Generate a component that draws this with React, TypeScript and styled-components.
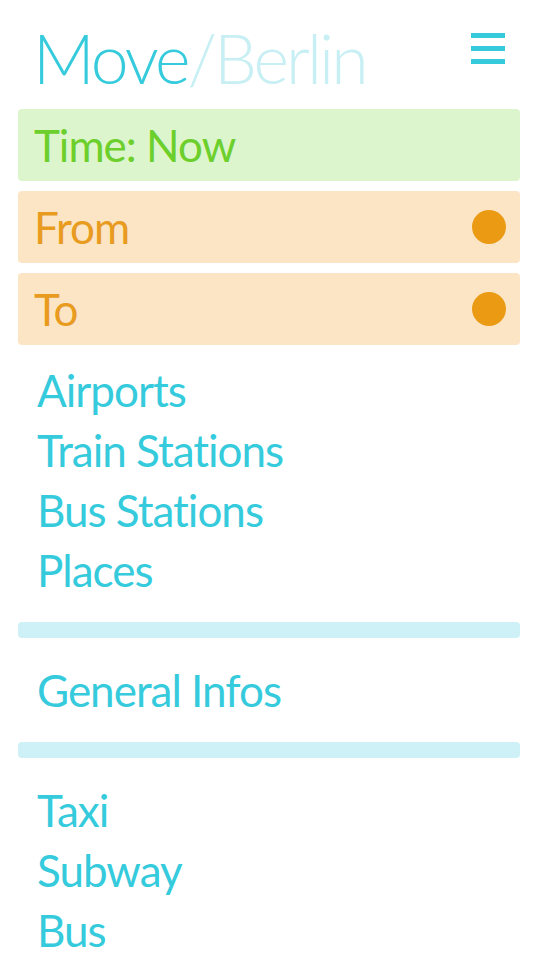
import styled, { createGlobalStyle } from "styled-components";

const GlobalStyle = createGlobalStyle`
  html, body {
    margin: 0;
    padding: 0;
    background: #ffffff;
  }
  body {
    font-family: Lato, "Open Sans", sans-serif;
  }
`;

const Page = styled.div`
  width: 540px;
  height: 960px;
  overflow: hidden;
  padding: 0 20px 0 18px;
  box-sizing: border-box;
  display: flex;
  flex-direction: column;
`;

const Header = styled.header`
  height: 110px;
  padding-top: 22px;
  box-sizing: border-box;
  display: flex;
  justify-content: space-between;
  align-items: flex-start;
`;

const Title = styled.h1`
  margin: 0 0 0 15px;
  font-size: 68px;
  line-height: 72px;
  font-weight: 300;
  letter-spacing: -3px;
  color: #35cbdc;

  span {
    color: #c8eff4;
  }
`;

const MenuButton = styled.button`
  margin: 11px 15px 0 0;
  padding: 0;
  border: none;
  background: none;
  display: flex;
`;

const Fields = styled.div`
  display: flex;
  flex-direction: column;
  gap: 10px;
`;

const Field = styled.div<{ $tone: "green" | "orange" }>`
  height: 72px;
  border-radius: 4px;
  padding: 0 14px 0 16px;
  box-sizing: border-box;
  display: flex;
  align-items: center;
  justify-content: space-between;
  font-size: 44px;
  line-height: 60px;
  letter-spacing: -1px;
  background: ${(p) => (p.$tone === "green" ? "#dcf5cd" : "#fbe5c5")};
  color: ${(p) => (p.$tone === "green" ? "#6ccf2b" : "#e89b1e")};
`;

const Dot = styled.span`
  width: 34px;
  height: 34px;
  border-radius: 50%;
  background: #eb9a14;
`;

const LinkList = styled.ul<{ $first?: boolean }>`
  list-style: none;
  margin: ${(p) => (p.$first ? "15px" : "0")} 0 0;
  padding: 0 0 0 19px;
`;

const LinkItem = styled.li`
  font-size: 44px;
  line-height: 60px;
  letter-spacing: -1px;
  color: #35cbdc;
  white-space: nowrap;
`;

const Divider = styled.hr`
  margin: 22px 0;
  height: 16px;
  border: none;
  border-radius: 4px;
  background: #cdf1f7;
`;

const MenuIcon = () => (
  <svg width="34" height="31" viewBox="0 0 34 31">
    <rect x="0" y="0" width="34" height="5" fill="#35cbdc" />
    <rect x="0" y="13" width="34" height="5" fill="#35cbdc" />
    <rect x="0" y="26" width="34" height="5" fill="#35cbdc" />
  </svg>
);

const places = ["Airports", "Train Stations", "Bus Stations", "Places"];
const transport = ["Taxi", "Subway", "Bus"];

export default function App() {
  return (
    <>
      <GlobalStyle />
      <Page>
        <Header>
          <Title>
            Move<span>/Berlin</span>
          </Title>
          <MenuButton aria-label="Menu">
            <MenuIcon />
          </MenuButton>
        </Header>

        <Fields>
          <Field $tone="green">Time: Now</Field>
          <Field $tone="orange">
            From
            <Dot />
          </Field>
          <Field $tone="orange">
            To
            <Dot />
          </Field>
        </Fields>

        <LinkList $first>
          {places.map((p) => (
            <LinkItem key={p}>{p}</LinkItem>
          ))}
        </LinkList>

        <Divider />

        <LinkList>
          <LinkItem>General Infos</LinkItem>
        </LinkList>

        <Divider />

        <LinkList>
          {transport.map((t) => (
            <LinkItem key={t}>{t}</LinkItem>
          ))}
        </LinkList>
      </Page>
    </>
  );
}
